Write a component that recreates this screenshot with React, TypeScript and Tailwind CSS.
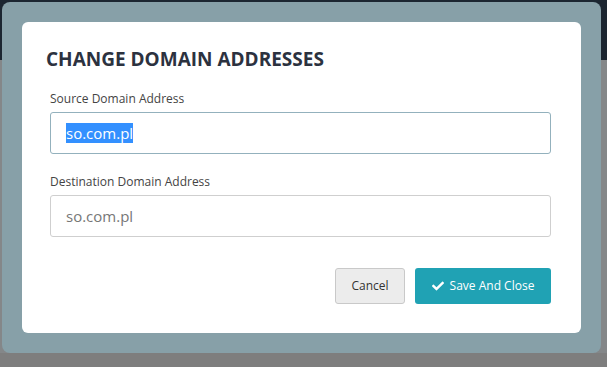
import React from "react";
import { FaCheck } from "react-icons/fa";

const Field = ({ label, value, selected }: { label: string; value: string; selected?: boolean }) => {
    return (
        <div className="flex flex-col">
            <label className="text-[12px] leading-[17px] text-[#444] mb-[5px]">{label}</label>
            <div
                className={`h-[42px] flex items-center pl-[15px] rounded-[3px] border bg-white text-[15px] leading-[20px] ${
                    selected ? "border-[#93b1bd] text-[#333]" : "border-[#cfcfcf] text-[#777]"
                }`}
            >
                {selected ? <span className="bg-[#3390ff] text-white">{value}</span> : value}
            </div>
        </div>
    );
};

const App: React.FC = () => {
    return (
        <div
            className="w-[607px] h-[367px] overflow-hidden p-[2px] bg-[linear-gradient(to_bottom,#1c2631_0px,#1c2631_60px,#848789_60px,#848789_353px,#7e7e7e_353px)]"
            style={{ fontFamily: '"Open Sans", "Liberation Sans", sans-serif' }}
        >
            {/* overlay frame */}
            <div className="w-[599px] h-[351px] rounded-[8px] bg-[#87a0a8] pt-[20px] pl-[20px]">
                {/* modal */}
                <div className="w-[559px] h-[311px] rounded-[6px] bg-white pt-[24px] pl-[24px] pr-[30px]">
                    <h2 className="text-[19px] leading-[26px] font-bold text-[#2c323f] tracking-[0px]">
                        CHANGE DOMAIN ADDRESSES
                    </h2>

                    <div className="pl-[4px] mt-[18px] flex flex-col gap-[19px]">
                        <Field label="Source Domain Address" value="so.com.pl" selected />
                        <Field label="Destination Domain Address" value="so.com.pl" />
                    </div>

                    <div className="flex justify-end gap-[10px] mt-[31px]">
                        <button className="w-[70px] h-[36px] rounded-[3px] border border-[#c9c9c9] bg-[#ececec] text-[12px] text-[#333]">
                            Cancel
                        </button>
                        <button className="w-[136px] h-[36px] rounded-[3px] bg-[#20a2b4] text-[12px] text-white flex items-center justify-center gap-[6px]">
                            <FaCheck size={12} />
                            Save And Close
                        </button>
                    </div>
                </div>
            </div>
        </div>
    );
};

export default App;
